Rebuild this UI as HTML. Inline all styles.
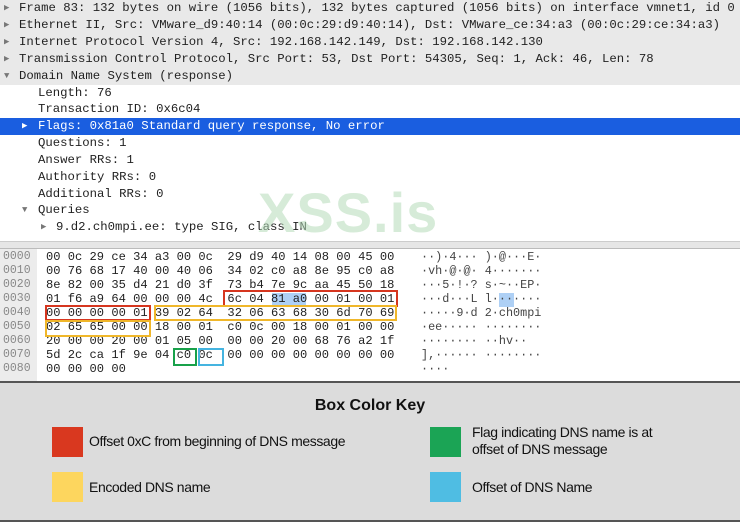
<!DOCTYPE html>
<html><head><meta charset="utf-8"><style>
*{margin:0;padding:0;box-sizing:border-box}
body{width:740px;height:522px;overflow:hidden;background:#fff;position:relative;font-family:"Liberation Mono",monospace}
.row{position:absolute;left:0;width:740px;height:17px;font-size:12.3px;line-height:17px;color:#222;white-space:pre}
.g{background:#e9e9e9}
.sel{background:#1a5ee0;color:#fff}
.tri{position:absolute;font-size:9px;color:#777}
.hx{position:absolute;font-size:12.1px;line-height:14px;white-space:pre;color:#222}
.box{position:absolute;border:2px solid}
</style></head><body>
<div class="row g" style="top:0"><span class="tri" style="left:4px">▶</span><span style="position:absolute;left:19px">Frame 83: 132 bytes on wire (1056 bits), 132 bytes captured (1056 bits) on interface vmnet1, id 0</span></div>
<div class="row g" style="top:17px"><span class="tri" style="left:4px">▶</span><span style="position:absolute;left:19px">Ethernet II, Src: VMware_d9:40:14 (00:0c:29:d9:40:14), Dst: VMware_ce:34:a3 (00:0c:29:ce:34:a3)</span></div>
<div class="row g" style="top:34px"><span class="tri" style="left:4px">▶</span><span style="position:absolute;left:19px">Internet Protocol Version 4, Src: 192.168.142.149, Dst: 192.168.142.130</span></div>
<div class="row g" style="top:51px"><span class="tri" style="left:4px">▶</span><span style="position:absolute;left:19px">Transmission Control Protocol, Src Port: 53, Dst Port: 54305, Seq: 1, Ack: 46, Len: 78</span></div>
<div class="row g" style="top:68px;width:740px"><span class="tri" style="left:4px">▼</span><span style="position:absolute;left:19px">Domain Name System (response)</span></div>
<div class="row" style="top:85px"><span style="position:absolute;left:38px">Length: 76</span></div>
<div class="row" style="top:101px"><span style="position:absolute;left:38px">Transaction ID: 0x6c04</span></div>
<div class="row sel" style="top:118px"><span class="tri" style="left:22px;color:#fff">▶</span><span style="position:absolute;left:38px">Flags: 0x81a0 Standard query response, No error</span></div>
<div class="row" style="top:135px"><span style="position:absolute;left:38px">Questions: 1</span></div>
<div class="row" style="top:152px"><span style="position:absolute;left:38px">Answer RRs: 1</span></div>
<div class="row" style="top:169px"><span style="position:absolute;left:38px">Authority RRs: 0</span></div>
<div class="row" style="top:186px"><span style="position:absolute;left:38px">Additional RRs: 0</span></div>
<div class="row" style="top:202px"><span class="tri" style="left:22px">▼</span><span style="position:absolute;left:38px">Queries</span></div>
<div class="row" style="top:219px"><span class="tri" style="left:41px">▶</span><span style="position:absolute;left:56px">9.d2.ch0mpi.ee: type SIG, class IN</span></div>
<div style="position:absolute;left:258px;top:180px;font-family:'Liberation Sans',sans-serif;font-weight:bold;font-size:56px;color:#b5dcb9;opacity:.55;letter-spacing:1px">XSS.is</div>
<div style="position:absolute;left:0;top:241px;width:740px;height:8px;background:#e6e6e6;border-top:1px solid #ccc;border-bottom:1px solid #bbb"></div>
<div style="position:absolute;left:0;top:249px;width:37px;height:133px;background:#ececec"></div>
<div style="position:absolute;left:272px;top:293px;width:34px;height:14px;background:#aed0f5"></div>
<div style="position:absolute;left:499px;top:293px;width:15px;height:14px;background:#aed0f5"></div>
<div class="hx" style="left:3px;top:250px;color:#888;font-size:11.5px">0000
0010
0020
0030
0040
0050
0060
0070
0080</div>
<div class="hx" style="left:46px;top:250px">00 0c 29 ce 34 a3 00 0c  29 d9 40 14 08 00 45 00
00 76 68 17 40 00 40 06  34 02 c0 a8 8e 95 c0 a8
8e 82 00 35 d4 21 d0 3f  73 b4 7e 9c aa 45 50 18
01 f6 a9 64 00 00 00 4c  6c 04 81 a0 00 01 00 01
00 00 00 00 01 39 02 64  32 06 63 68 30 6d 70 69
02 65 65 00 00 18 00 01  c0 0c 00 18 00 01 00 00
20 00 00 20 00 01 05 00  00 00 20 00 68 76 a2 1f
5d 2c ca 1f 9e 04 c0 0c  00 00 00 00 00 00 00 00
00 00 00 00</div>
<div class="hx" style="left:421px;top:250px;color:#444;font-size:11.8px">··)·4··· )·@···E·
·vh·@·@· 4·······
···5·!·? s·~··EP·
···d···L l·······
·····9·d 2·ch0mpi
·ee····· ········
········ ··hv··
],······ ········
····</div>
<div class="box" style="left:223px;top:290px;width:175px;height:17px;border-color:#d6361f"></div>
<div class="box" style="left:45px;top:305px;width:106px;height:16px;border-color:#d6361f"></div>
<div class="box" style="left:154px;top:305px;width:243px;height:16px;border-color:#f0b72a"></div>
<div class="box" style="left:45px;top:320px;width:106px;height:17px;border-color:#f0b72a"></div>
<div class="box" style="left:173px;top:348px;width:24px;height:18px;border-color:#18a14a"></div>
<div class="box" style="left:198px;top:348px;width:26px;height:18px;border-color:#45b4e0"></div>
<div style="position:absolute;left:0;top:381px;width:740px;height:141px;background:#dcdcdc;border-top:2px solid #555;border-bottom:2px solid #555;font-family:'Liberation Sans',sans-serif;color:#111">
<div style="position:absolute;left:0;width:740px;top:14px;text-align:center;font-weight:bold;font-size:16px">Box Color Key</div>
<div style="position:absolute;left:52px;top:44px;width:31px;height:30px;background:#d9381f"></div>
<div style="position:absolute;left:89px;top:50px;font-size:14px;letter-spacing:-0.4px">Offset 0xC from beginning of DNS message</div>
<div style="position:absolute;left:430px;top:44px;width:31px;height:30px;background:#1ba455"></div>
<div style="position:absolute;left:472px;top:41px;font-size:14px;line-height:17px;letter-spacing:-0.4px">Flag indicating DNS name is at<br>offset of DNS message</div>
<div style="position:absolute;left:52px;top:89px;width:31px;height:30px;background:#fdd65e"></div>
<div style="position:absolute;left:89px;top:96px;font-size:14px;letter-spacing:-0.4px">Encoded DNS name</div>
<div style="position:absolute;left:430px;top:89px;width:31px;height:30px;background:#4fbde3"></div>
<div style="position:absolute;left:472px;top:96px;font-size:14px;letter-spacing:-0.4px">Offset of DNS Name</div>
</div>
</body></html>
